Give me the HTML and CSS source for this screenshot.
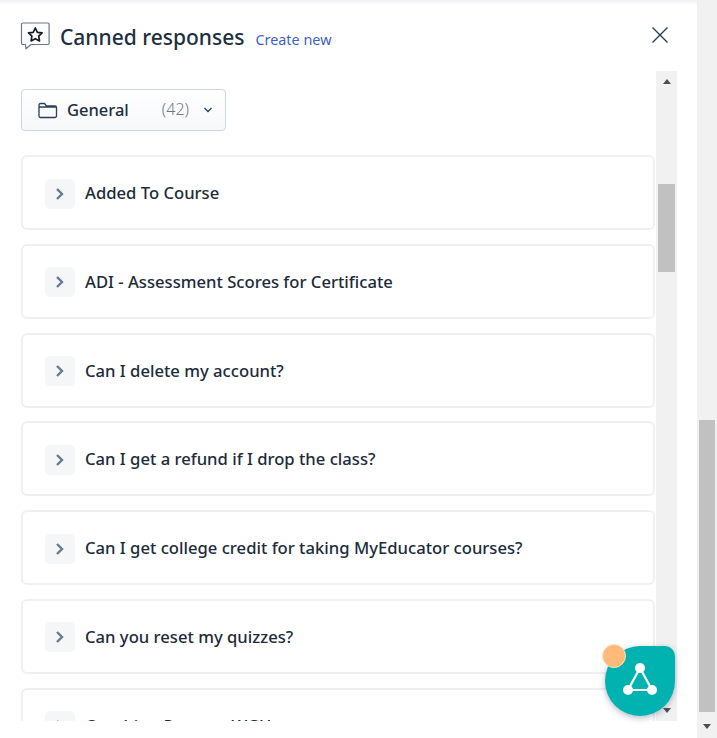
FILE: index.html
```html
<!DOCTYPE html>
<html lang="en">
<head>
<meta charset="utf-8">
<title>Canned responses</title>
<link rel="stylesheet" href="styles.css">
</head>
<body>
<div class="page">
  <main class="panel">
    <header class="head">
      <svg class="head-icon" width="30" height="30" viewBox="0 0 30 30" fill="none">
        <path d="M2.500 23.500a1.300 1.300 0 0 1-1-1.300V3.300A1.300 1.300 0 0 1 2.800 2h25a1.300 1.300 0 0 1 1.300 1.300v18.900a1.300 1.300 0 0 1-1.300 1.300H11l-5 4.300-.6-4.300z" stroke="#68778d" stroke-width="1.200" stroke-linejoin="round"/>
        <path d="M15.300 7l2.100 4.300 4.700.6-3.400 3.300.8 4.700-4.200-2.200-4.200 2.200.8-4.700-3.400-3.300 4.700-.6z" stroke="#111c28" stroke-width="1.700" stroke-linejoin="round"/>
      </svg>
      <h1 class="title">Canned responses</h1>
      <a class="create" href="#">Create new</a>
      <svg class="close" width="18" height="18" viewBox="0 0 18 18" fill="none">
        <path d="M1.500 1.500l15 15M16.500 1.500l-15 15" stroke="#22405a" stroke-width="1.400"/>
      </svg>
    </header>
    <div class="body">
      <div class="list">
        <button class="folder">
          <svg class="folder-icon" width="20" height="17" viewBox="0 0 20 17" fill="none">
            <path d="M1 14V3a1.500 1.500 0 0 1 1.500-1.500h4L8.500 4h8.500A1.500 1.500 0 0 1 18.500 5.500V14a1.500 1.500 0 0 1-1.500 1.500H2.500A1.500 1.500 0 0 1 1 14zM1 5h17.500" stroke="#2b3f55" stroke-width="1.300" stroke-linejoin="round"/>
          </svg>
          <span class="folder-name">General</span>
          <span class="folder-count">(42)</span>
          <svg class="folder-caret" width="10" height="6" viewBox="0 0 10 6" fill="none">
            <path d="M1.500 1l3.500 3.500L8.500 1" stroke="#2b3f55" stroke-width="1.300"/>
          </svg>
        </button>
        <div class="card"><span class="expander"><svg width="10" height="14" viewBox="0 0 10 14" fill="none"><path d="M2 2l5 5-5 5" stroke="#667a90" stroke-width="2.400"/></svg></span><span class="card-text">Added To Course</span></div>
        <div class="card"><span class="expander"><svg width="10" height="14" viewBox="0 0 10 14" fill="none"><path d="M2 2l5 5-5 5" stroke="#667a90" stroke-width="2.400"/></svg></span><span class="card-text">ADI - Assessment Scores for Certificate</span></div>
        <div class="card"><span class="expander"><svg width="10" height="14" viewBox="0 0 10 14" fill="none"><path d="M2 2l5 5-5 5" stroke="#667a90" stroke-width="2.400"/></svg></span><span class="card-text">Can I delete my account?</span></div>
        <div class="card"><span class="expander"><svg width="10" height="14" viewBox="0 0 10 14" fill="none"><path d="M2 2l5 5-5 5" stroke="#667a90" stroke-width="2.400"/></svg></span><span class="card-text">Can I get a refund if I drop the class?</span></div>
        <div class="card"><span class="expander"><svg width="10" height="14" viewBox="0 0 10 14" fill="none"><path d="M2 2l5 5-5 5" stroke="#667a90" stroke-width="2.400"/></svg></span><span class="card-text">Can I get college credit for taking MyEducator courses?</span></div>
        <div class="card"><span class="expander"><svg width="10" height="14" viewBox="0 0 10 14" fill="none"><path d="M2 2l5 5-5 5" stroke="#667a90" stroke-width="2.400"/></svg></span><span class="card-text">Can you reset my quizzes?</span></div>
        <div class="card"><span class="expander"><svg width="10" height="14" viewBox="0 0 10 14" fill="none"><path d="M2 2l5 5-5 5" stroke="#667a90" stroke-width="2.400"/></svg></span><span class="card-text">Coaching Report - WGU</span></div>
      </div>
      <div class="bar bar-inner">
        <span class="arrow-up"></span>
        <span class="thumb thumb-inner"></span>
        <span class="arrow-down arrow-end"></span>
      </div>
    </div>
    <div class="fab">
      <span class="fab-dot"></span>
      <svg class="fab-icon" width="38" height="34" viewBox="0 0 38 34" fill="none">
        <path d="M19 6L7 28h24z" stroke="#fff" stroke-width="2.200"/>
        <circle cx="19" cy="6" r="5" fill="#fff"/>
        <circle cx="7" cy="28" r="5" fill="#fff"/>
        <circle cx="31" cy="28" r="5" fill="#fff"/>
      </svg>
    </div>
  </main>
  <div class="bar bar-outer">
    <span class="thumb thumb-outer"></span>
    <span class="arrow-down"></span>
  </div>
</div>
</body>
</html>
```
FILE: styles.css
```css
* { box-sizing: border-box; }
html, body { margin: 0; height: 100%; overflow: hidden; background: #fff; }
body { font-family: "Noto Sans", "Open Sans", sans-serif; color: #1d2b3a; }
.page { display: flex; width: 717px; height: 738px; }
.panel { position: relative; flex: 0 0 697px; width: 697px; height: 738px; background: linear-gradient(#f0f1f4, #fff 5px); }
.head { display: flex; align-items: center; height: 71px; padding: 0 28px 0 20px; }
.head-icon { flex: none; margin-top: 1px; }
.title { margin: 3px 0 0 10px; font-size: 21px; font-weight: 500; color: #1d2f40; }
.create { margin: 7px 0 0 11px; font-size: 14.400px; color: #3f5fc4; text-decoration: none; }
.close { margin-left: auto; margin-bottom: 1px; }
.body { display: flex; height: 650px; padding-left: 21px; padding-right: 20px; }
.list { flex: 1; height: 650px; overflow: hidden; padding-top: 18px; }
.folder { display: flex; align-items: center; width: 205px; height: 42px; padding: 0 12px 0 16px; margin: 0 0 24px; border: 1px solid #ced6e0; border-radius: 4px; background: linear-gradient(#fff, #f6f8fa); font: inherit; color: inherit; }
.folder-icon { flex: none; }
.folder-name { margin: -2px 0 0 9px; font-size: 16.500px; font-weight: 500; color: #1d2f40; }
.folder-count { margin: -2px 0 0 auto; font-size: 16px; font-weight: 300; color: #6d7986; }
.folder-caret { flex: none; margin-left: 14px; }
.card { display: flex; align-items: center; width: 634px; height: 75px; margin: 0 0 13.800px; padding: 2px 0 0 22px; border: 2px solid #eef0f3; border-radius: 6px; background: #fff; }
.expander { display: flex; align-items: center; justify-content: center; flex: none; width: 30px; height: 30px; border-radius: 5px; background: #f4f6f8; }
.card-text { margin: -2px 0 0 10px; font-size: 16.650px; font-weight: 500; color: #1d2b3a; }
.bar { display: flex; flex-direction: column; align-items: center; background: #f1f1f1; }
.bar-inner { flex: 0 0 21px; width: 21px; height: 650px; margin-left: 1px; }
.bar-outer { flex: 0 0 20px; width: 20px; height: 738px; }
.thumb { display: block; background: #c1c1c1; }
.thumb-inner { width: 17px; height: 88px; margin-top: 100px; }
.thumb-outer { width: 16px; height: 292px; margin-top: 420px; }
.arrow-up, .arrow-down { display: block; width: 0; height: 0; border-left: 4.500px solid transparent; border-right: 4.500px solid transparent; }
.arrow-up { margin-top: 8px; border-bottom: 5px solid #505050; }
.arrow-down { margin-top: 12px; border-top: 5px solid #505050; }
.arrow-end { margin-top: auto; margin-bottom: 8px; }
.fab { position: absolute; left: 605px; top: 646px; display: flex; align-items: center; justify-content: center; width: 70px; height: 70px; border-radius: 50%; border-top-right-radius: 10px; background: #00b3b0; box-shadow: 0 2px 6px rgba(40, 60, 90, 0.35); }
.fab-icon { margin-bottom: 4px; }
.fab-dot { position: absolute; left: -3px; top: -2px; width: 24px; height: 24px; border-radius: 50%; background: #ffb97a; border: 1px solid #ffe3c8; }
```
